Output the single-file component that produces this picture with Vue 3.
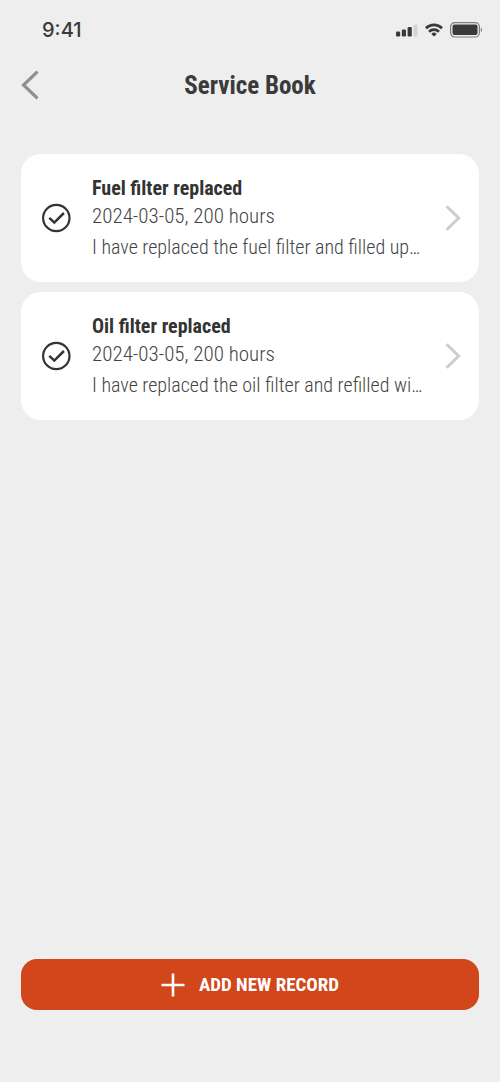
<script setup>
const time = '9:41'
const records = [
  {
    id: 1,
    title: 'Fuel filter replaced',
    meta: '2024-03-05, 200 hours',
    note: 'I have replaced the fuel filter and filled up…',
  },
  {
    id: 2,
    title: 'Oil filter replaced',
    meta: '2024-03-05, 200 hours',
    note: 'I have replaced the oil filter and refilled wi…',
  },
]
</script>

<template>
  <div class="screen">
    <div class="status">
      <span class="time">{{ time }}</span>
      <div class="indicators">
        <svg width="22" height="14" viewBox="0 0 22 14" aria-hidden="true">
          <rect x="0" y="8.500" width="4.200" height="5" rx="1.200" fill="#3a3a3a" />
          <rect x="5.800" y="6.500" width="4.200" height="7" rx="1.200" fill="#3a3a3a" />
          <rect x="11.600" y="4" width="4.200" height="9.500" rx="1.200" fill="#3a3a3a" />
          <rect x="17.400" y="1.500" width="4.200" height="12" rx="1.200" fill="#d5d5d5" />
        </svg>
        <svg width="18" height="14" viewBox="0 0 18 14" fill="none" stroke="#3a3a3a" stroke-width="2.700" aria-hidden="true">
          <path d="M1 5.200a11.500 11.500 0 0 1 16 0" />
          <path d="M4 8.700a7.200 7.200 0 0 1 10 0" />
          <path d="M6.300 10.900a3.900 3.900 0 0 1 5.400 0L9 13.600z" fill="#3a3a3a" stroke="none" />
        </svg>
        <svg width="33" height="16" viewBox="0 0 33 16" aria-hidden="true">
          <rect x="0.600" y="0.600" width="28.800" height="14.400" rx="4.200" fill="none" stroke="#7d7d7d" stroke-width="1.200" />
          <rect x="2.500" y="2.500" width="25" height="10.600" rx="2" fill="#3a3a3a" />
          <path d="M30.800 5.500c1.800.800 1.800 4 0 4.800z" fill="#858585" />
        </svg>
      </div>
    </div>

    <header class="header">
      <button class="back" type="button" aria-label="Back">
        <svg width="20" height="30" viewBox="0 0 20 30" fill="none" stroke="#8f8f8f" stroke-width="3.200" aria-hidden="true">
          <path d="M16.500 1.700 2.500 15l14 13.300" />
        </svg>
      </button>
      <h1 class="title">Service Book</h1>
    </header>

    <main class="records">
      <button v-for="record in records" :key="record.id" class="card" type="button">
        <svg width="30" height="30" viewBox="0 0 30 30" fill="none" stroke="#333" aria-hidden="true">
          <circle cx="15.300" cy="15" r="13.200" stroke-width="2.200" />
          <path d="m8.300 14.800 5 4.800 9.600-9.600" stroke-width="2.500" />
        </svg>
        <span class="body">
          <span class="name">{{ record.title }}</span>
          <span class="meta">{{ record.meta }}</span>
          <span class="note">{{ record.note }}</span>
        </span>
        <svg width="16" height="26" viewBox="0 0 16 26" fill="none" stroke="#cdcdcd" stroke-width="3" aria-hidden="true">
          <path d="m1.600 1.200 12 11.800-12 11.800" />
        </svg>
      </button>
    </main>

    <footer class="footer">
      <button class="add" type="button">
        <svg width="24" height="24" viewBox="0 0 24 24" fill="none" stroke="#fff" stroke-width="2.600" aria-hidden="true">
          <path d="M12 .5v23M.5 12h23" />
        </svg>
        <span>ADD NEW RECORD</span>
      </button>
    </footer>
  </div>
</template>

<style>
body {
  margin: 0;
  background: #eee;
}
</style>

<style scoped>
.screen {
  box-sizing: border-box;
  display: flex;
  flex-direction: column;
  min-height: 100vh;
  padding: 0 21px 72px;
  background: #eee;
  color: #3a3a3a;
  font-family: "Roboto Condensed", "Liberation Sans Narrow", Roboto, sans-serif;
}
button {
  margin: 0;
  padding: 0;
  border: 0;
  background: none;
  color: inherit;
  font: inherit;
  cursor: pointer;
}
svg {
  display: block;
  flex: none;
}
.status {
  display: flex;
  align-items: center;
  justify-content: space-between;
  height: 59px;
  padding-left: 21px;
}
.time {
  font-family: Inter, sans-serif;
  font-size: 20px;
  line-height: 24px;
  font-weight: 500;
}
.indicators {
  display: flex;
  align-items: center;
  gap: 7px;
  margin-right: -4px;
}
.header {
  display: grid;
  grid-template-columns: 20px 1fr 20px;
  align-items: center;
  height: 52px;
}
.title {
  margin: 0;
  padding-top: 2px;
  font-size: 25px;
  line-height: 30px;
  font-weight: 700;
  text-align: center;
}
.records {
  display: flex;
  flex-direction: column;
  gap: 10px;
  margin-top: 43px;
}
.card {
  display: flex;
  align-items: center;
  min-height: 128px;
  padding: 0 18px 0 20px;
  border-radius: 20px;
  background: #fff;
  text-align: left;
}
.body {
  display: flex;
  flex: 1;
  flex-direction: column;
  min-width: 0;
  margin: 0 12px 0 21px;
  padding-top: 2px;
  font-size: 20px;
  line-height: 28px;
  font-weight: 300;
  color: #444;
}
.name {
  font-weight: 700;
  color: #333;
}
.meta {
  font-size: 21px;
}
.note {
  line-height: 34px;
  overflow: hidden;
  text-overflow: ellipsis;
  white-space: nowrap;
}
.footer {
  margin-top: auto;
}
.add {
  display: flex;
  align-items: center;
  justify-content: center;
  gap: 14px;
  width: 100%;
  height: 51px;
  border-radius: 16px;
  background: #d1461b;
  color: #fff;
  font-size: 19px;
  font-weight: 700;
}
</style>
